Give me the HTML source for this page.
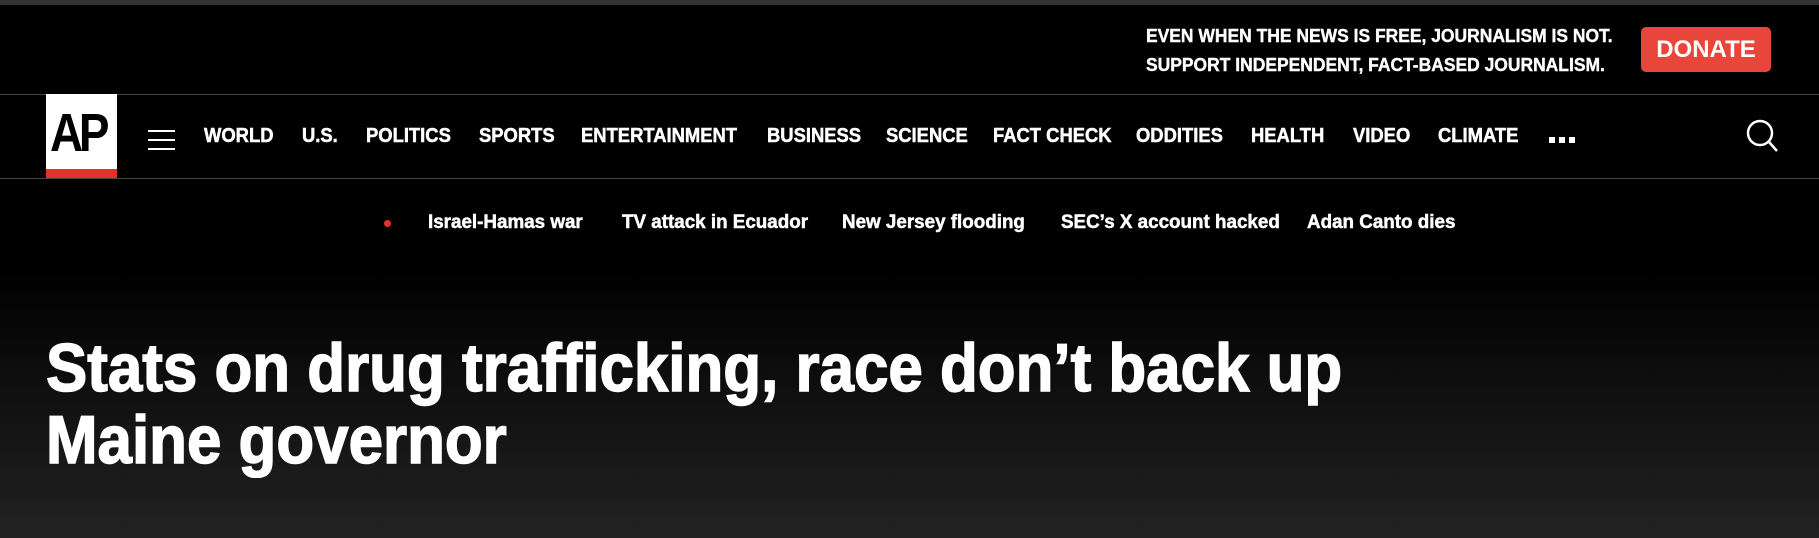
<!DOCTYPE html>
<html><head><meta charset="utf-8"><style>
*{margin:0;padding:0;box-sizing:border-box}
body{width:1819px;height:538px;overflow:hidden;background:linear-gradient(#000 0,#000 270px,#222 538px);font-family:"Liberation Sans Narrow","Liberation Sans",sans-serif;font-weight:bold;color:#fff;position:relative}
.a{position:absolute;white-space:nowrap;transform-origin:left center}
.n{font-size:20px;top:124px;line-height:24px;transform:scaleX(.92);-webkit-text-stroke:.5px #fff}
.t{font-size:19px;top:211px;line-height:24px;transform:scaleX(.99);-webkit-text-stroke:.5px #fff}
</style></head><body>
<div class="a" style="left:0;top:0;width:1819px;height:5px;background:#333"></div>
<div class="a" style="left:1146px;top:22px;font-size:18px;line-height:29px;transform:scaleX(.97);-webkit-text-stroke:.4px #fff">EVEN WHEN THE NEWS IS FREE, JOURNALISM IS NOT.<br>SUPPORT INDEPENDENT, FACT-BASED JOURNALISM.</div>
<div class="a" style="left:1641px;top:27px;width:130px;height:45px;background:#e8463b;border-radius:5px;font-size:24px;line-height:45px;text-align:center">DONATE</div>
<div class="a" style="left:0;top:94px;width:1819px;height:1px;background:#444"></div>
<div class="a" style="left:0;top:178px;width:1819px;height:1px;background:#444"></div>
<div class="a" style="left:46px;top:94px;width:71px;height:84px;background:#fff"></div>
<div class="a" style="left:46px;top:169px;width:71px;height:9px;background:#e8302b"></div>
<div class="a" style="left:50px;top:104px;width:66px;font-family:'Liberation Sans',sans-serif;font-size:54px;line-height:58px;color:#000;letter-spacing:-5px;transform:scaleX(.85)">AP</div>
<div class="a" style="left:148px;top:130px;width:27px;height:2px;background:#fff"></div>
<div class="a" style="left:148px;top:139px;width:27px;height:2px;background:#fff"></div>
<div class="a" style="left:148px;top:148px;width:27px;height:2px;background:#fff"></div>
<div class="a n" style="left:204px">WORLD</div>
<div class="a n" style="left:302px">U.S.</div>
<div class="a n" style="left:366px">POLITICS</div>
<div class="a n" style="left:479px">SPORTS</div>
<div class="a n" style="left:581px">ENTERTAINMENT</div>
<div class="a n" style="left:767px">BUSINESS</div>
<div class="a n" style="left:886px">SCIENCE</div>
<div class="a n" style="left:993px">FACT CHECK</div>
<div class="a n" style="left:1136px">ODDITIES</div>
<div class="a n" style="left:1251px">HEALTH</div>
<div class="a n" style="left:1353px">VIDEO</div>
<div class="a n" style="left:1438px">CLIMATE</div>
<div class="a" style="left:1549px;top:137px;width:6px;height:6px;background:#fff"></div>
<div class="a" style="left:1559px;top:137px;width:6px;height:6px;background:#fff"></div>
<div class="a" style="left:1569px;top:137px;width:6px;height:6px;background:#fff"></div>
<svg class="a" style="left:1744px;top:118px" width="36" height="36" viewBox="0 0 36 36"><circle cx="16" cy="15" r="12" fill="none" stroke="#fff" stroke-width="2.5"/><path d="M25 24 L33 33" stroke="#fff" stroke-width="2.5"/></svg>
<div class="a" style="left:384px;top:220px;width:7px;height:7px;border-radius:50%;background:#e8302b"></div>
<div class="a t" style="left:428px">Israel-Hamas war</div>
<div class="a t" style="left:622px">TV attack in Ecuador</div>
<div class="a t" style="left:842px">New Jersey flooding</div>
<div class="a t" style="left:1061px">SEC’s X account hacked</div>
<div class="a t" style="left:1307px">Adan Canto dies</div>
<div class="a" style="left:46px;top:332px;font-size:68px;line-height:72px;transform:scaleX(.91);-webkit-text-stroke:1.5px #fff">Stats on drug trafficking, race don’t back up<br>Maine governor</div>
</body></html>
